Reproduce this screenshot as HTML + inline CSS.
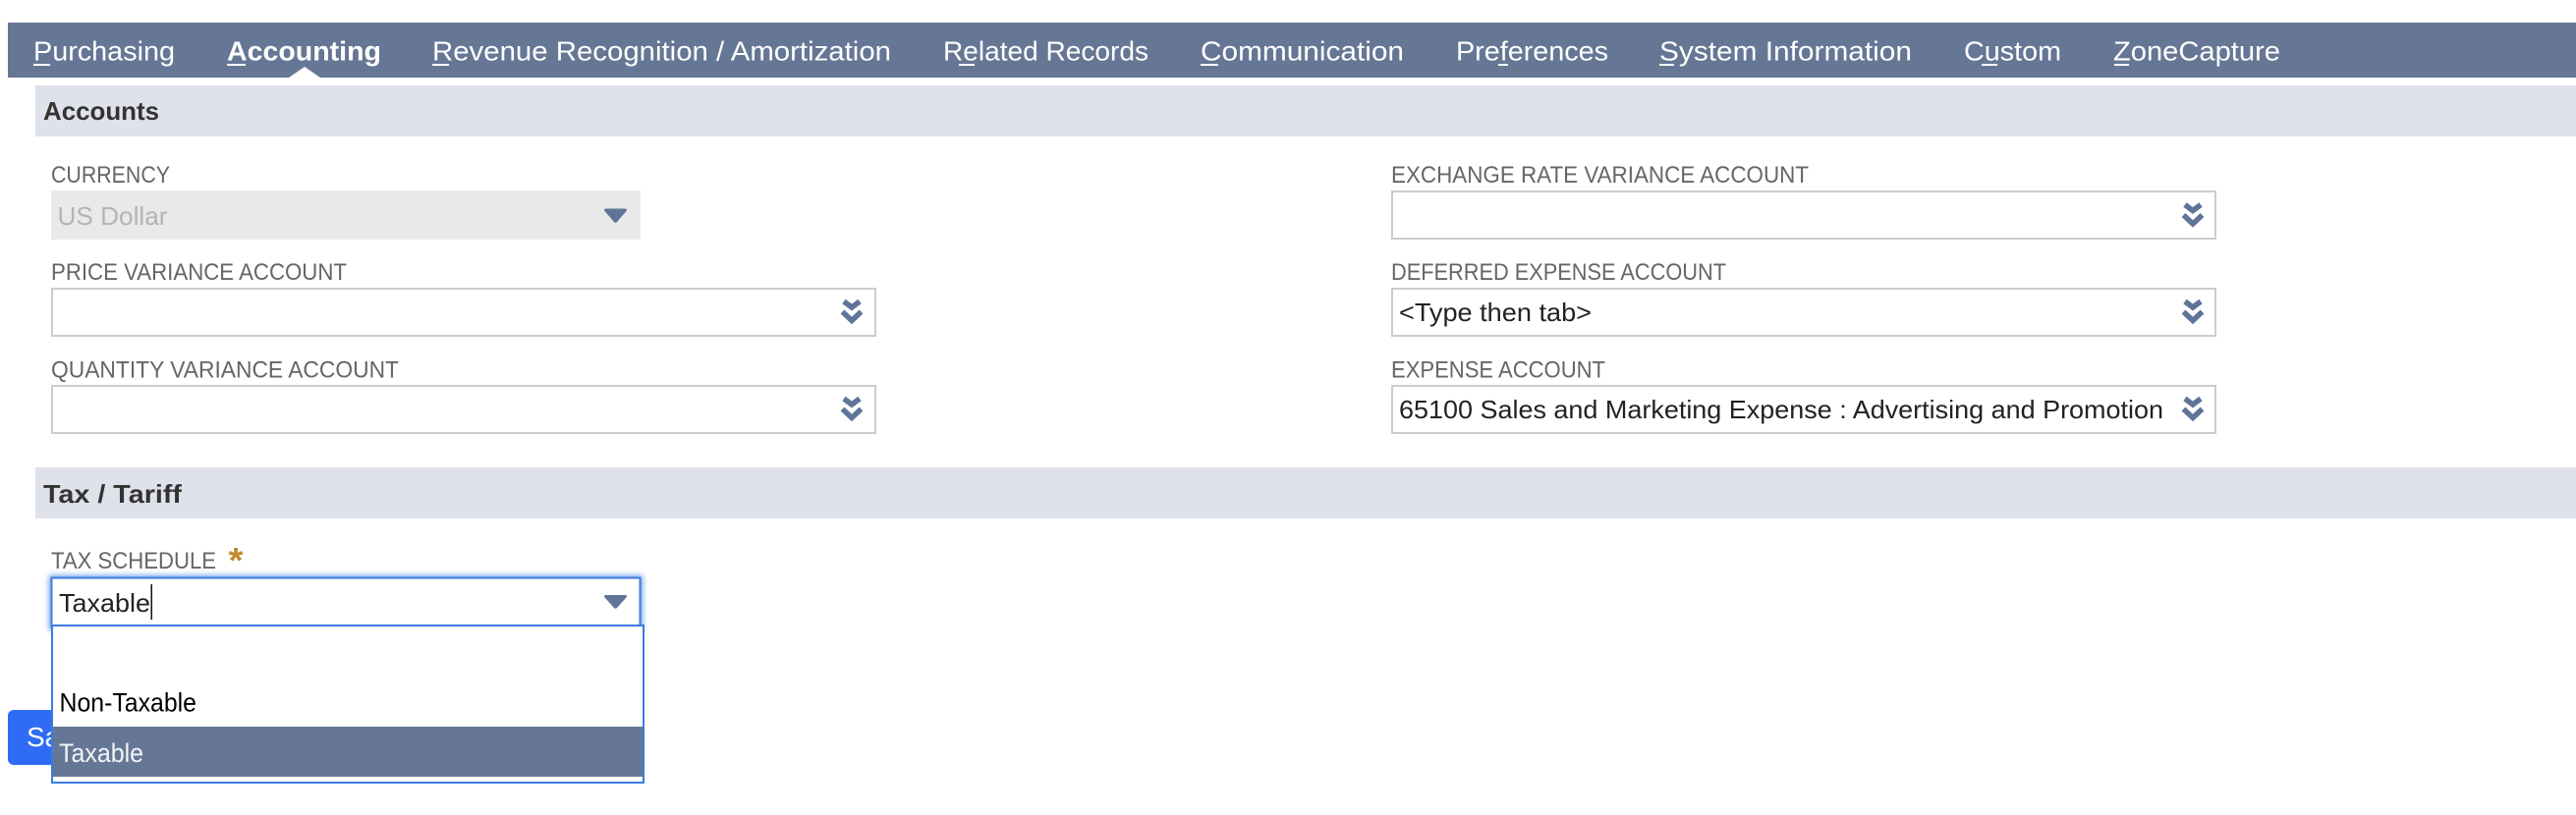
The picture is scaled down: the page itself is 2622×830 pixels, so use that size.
<!DOCTYPE html>
<html lang="en">
<head>
<meta charset="utf-8">
<title>Accounting</title>
<style>
html,body{margin:0;padding:0;background:#fff;width:2622px;height:830px;overflow:hidden}
svg{display:block}
text{font-family:"Liberation Sans",sans-serif}
.tab{font-size:28px;fill:#fff}
.lab{font-size:24px;fill:#666}
.val{font-size:26px;fill:#222}
.sec{font-size:26px;font-weight:bold;fill:#333}
.chev{fill:none;stroke:#5f7498;stroke-width:5.500px}
</style>
</head>
<body>
<svg xmlns="http://www.w3.org/2000/svg" width="2622" height="830" viewBox="0 0 2622 830">
<defs>
<filter id="glow" x="-5%" y="-30%" width="110%" height="160%"><feGaussianBlur stdDeviation="3"/></filter>
</defs>
<rect width="2622" height="830" fill="#fff"/>

<!-- Tab bar -->
<rect x="8" y="23" width="2614" height="56" fill="#667795"/>
<path d="M294 79 L310 68 L326 79 Z" fill="#fff"/>
<text class="tab" x="34" y="61.500" textLength="144" lengthAdjust="spacingAndGlyphs">Purchasing</text>
<text class="tab" x="231" y="61.500" textLength="157" lengthAdjust="spacingAndGlyphs" style="font-weight:bold">Accounting</text>
<text class="tab" x="440" y="61.500" textLength="467" lengthAdjust="spacingAndGlyphs">Revenue Recognition / Amortization</text>
<text class="tab" x="960" y="61.500" textLength="209" lengthAdjust="spacingAndGlyphs">Related Records</text>
<text class="tab" x="1222" y="61.500" textLength="207" lengthAdjust="spacingAndGlyphs">Communication</text>
<text class="tab" x="1482" y="61.500" textLength="155" lengthAdjust="spacingAndGlyphs">Preferences</text>
<text class="tab" x="1689" y="61.500" textLength="257" lengthAdjust="spacingAndGlyphs">System Information</text>
<text class="tab" x="1999" y="61.500" textLength="99" lengthAdjust="spacingAndGlyphs">Custom</text>
<text class="tab" x="2151" y="61.500" textLength="170" lengthAdjust="spacingAndGlyphs">ZoneCapture</text>
<g fill="#fff">
<rect x="34" y="65" width="17" height="2"/>
<rect x="231" y="65" width="19" height="2"/>
<rect x="440" y="65" width="17" height="2"/>
<rect x="976" y="65" width="16" height="2"/>
<rect x="1222" y="65" width="18" height="2"/>
<rect x="1525" y="65" width="10" height="2"/>
<rect x="1689" y="65" width="15" height="2"/>
<rect x="2017" y="65" width="16" height="2"/>
<rect x="2152" y="65" width="15" height="2"/>
</g>

<!-- Accounts section -->
<rect x="36" y="87" width="2586" height="52" fill="#dfe2ea"/>
<text class="sec" x="44" y="122" textLength="118" lengthAdjust="spacingAndGlyphs">Accounts</text>

<!-- Left column -->
<text class="lab" x="52" y="186" textLength="121" lengthAdjust="spacingAndGlyphs">CURRENCY</text>
<rect x="52" y="194" width="600" height="50" fill="#e9e9e9"/>
<text x="58.500" y="229" font-size="26" fill="#b4b4b4" textLength="112" lengthAdjust="spacingAndGlyphs">US Dollar</text>
<path d="M617 212.500 H636 Q639 212.500 637.500 215 L628 226 Q626.500 227.500 625 226 L615.500 215 Q614 212.500 617 212.500 Z" fill="#5f7498"/>

<text class="lab" x="52" y="285" textLength="301" lengthAdjust="spacingAndGlyphs">PRICE VARIANCE ACCOUNT</text>
<rect x="53" y="294" width="838" height="48" fill="#fff" stroke="#ccc" stroke-width="2"/>
<path class="chev" d="M859 307 L867 313 L875 307 M857.500 317.500 L867 326.500 L876.500 317.500"/>

<text class="lab" x="52" y="384.500" textLength="354" lengthAdjust="spacingAndGlyphs">QUANTITY VARIANCE ACCOUNT</text>
<rect x="53" y="393" width="838" height="48" fill="#fff" stroke="#ccc" stroke-width="2"/>
<path class="chev" d="M859 406 L867 412 L875 406 M857.500 416.500 L867 425.500 L876.500 416.500"/>

<!-- Right column -->
<text class="lab" x="1416" y="186" textLength="425" lengthAdjust="spacingAndGlyphs">EXCHANGE RATE VARIANCE ACCOUNT</text>
<rect x="1417" y="195" width="838" height="48" fill="#fff" stroke="#ccc" stroke-width="2"/>
<path class="chev" d="M2224 208.500 L2232 214.500 L2240 208.500 M2222.500 219 L2232 228 L2241.500 219"/>

<text class="lab" x="1416" y="285" textLength="341" lengthAdjust="spacingAndGlyphs">DEFERRED EXPENSE ACCOUNT</text>
<rect x="1417" y="294" width="838" height="48" fill="#fff" stroke="#ccc" stroke-width="2"/>
<text class="val" x="1424" y="327" textLength="196" lengthAdjust="spacingAndGlyphs">&lt;Type then tab&gt;</text>
<path class="chev" d="M2224 307 L2232 313 L2240 307 M2222.500 317.500 L2232 326.500 L2241.500 317.500"/>

<text class="lab" x="1416" y="384.500" textLength="218" lengthAdjust="spacingAndGlyphs">EXPENSE ACCOUNT</text>
<rect x="1417" y="393" width="838" height="48" fill="#fff" stroke="#ccc" stroke-width="2"/>
<text class="val" x="1424" y="426" textLength="778" lengthAdjust="spacingAndGlyphs">65100 Sales and Marketing Expense : Advertising and Promotion</text>
<path class="chev" d="M2224 406 L2232 412 L2240 406 M2222.500 416.500 L2232 425.500 L2241.500 416.500"/>

<!-- Tax / Tariff section -->
<rect x="36" y="476" width="2586" height="52" fill="#dfe2ea"/>
<text class="sec" x="44" y="512" textLength="141" lengthAdjust="spacingAndGlyphs">Tax / Tariff</text>

<text class="lab" x="52" y="579" textLength="168" lengthAdjust="spacingAndGlyphs">TAX SCHEDULE</text>
<text x="232.500" y="583" font-size="36" fill="#c48a2e" textLength="15" lengthAdjust="spacingAndGlyphs" style="font-weight:bold">*</text>

<!-- Focused select -->
<rect x="50" y="586" width="604" height="56" fill="#4f8ae0" opacity="0.85" filter="url(#glow)"/>
<rect x="52.500" y="588.500" width="599" height="50" fill="#fff" stroke="#3b7ce0" stroke-width="2"/>
<text class="val" x="60" y="623" textLength="93" lengthAdjust="spacingAndGlyphs">Taxable</text>
<rect x="153.500" y="595" width="1.500" height="36" fill="#111"/>
<path d="M617 606 H636 Q639 606 637.500 608.500 L628 619 Q626.500 620.500 625 619 L615.500 608.500 Q614 606 617 606 Z" fill="#5f7498"/>

<!-- Save button -->
<rect x="8" y="723" width="60" height="56" rx="6" fill="#2f6bf5"/>
<text x="27" y="760" font-size="28" fill="#fff">Sa</text>

<!-- Dropdown -->
<rect x="53" y="637" width="602" height="160" fill="#fff" stroke="#3b7ce0" stroke-width="2"/>
<text x="60.500" y="724.500" font-size="27" fill="#000" textLength="139.500" lengthAdjust="spacingAndGlyphs">Non-Taxable</text>
<rect x="54" y="740" width="600" height="51" fill="#667795"/>
<text x="60" y="776" font-size="27" fill="#f2f4f8" textLength="86" lengthAdjust="spacingAndGlyphs">Taxable</text>
</svg>
</body>
</html>
